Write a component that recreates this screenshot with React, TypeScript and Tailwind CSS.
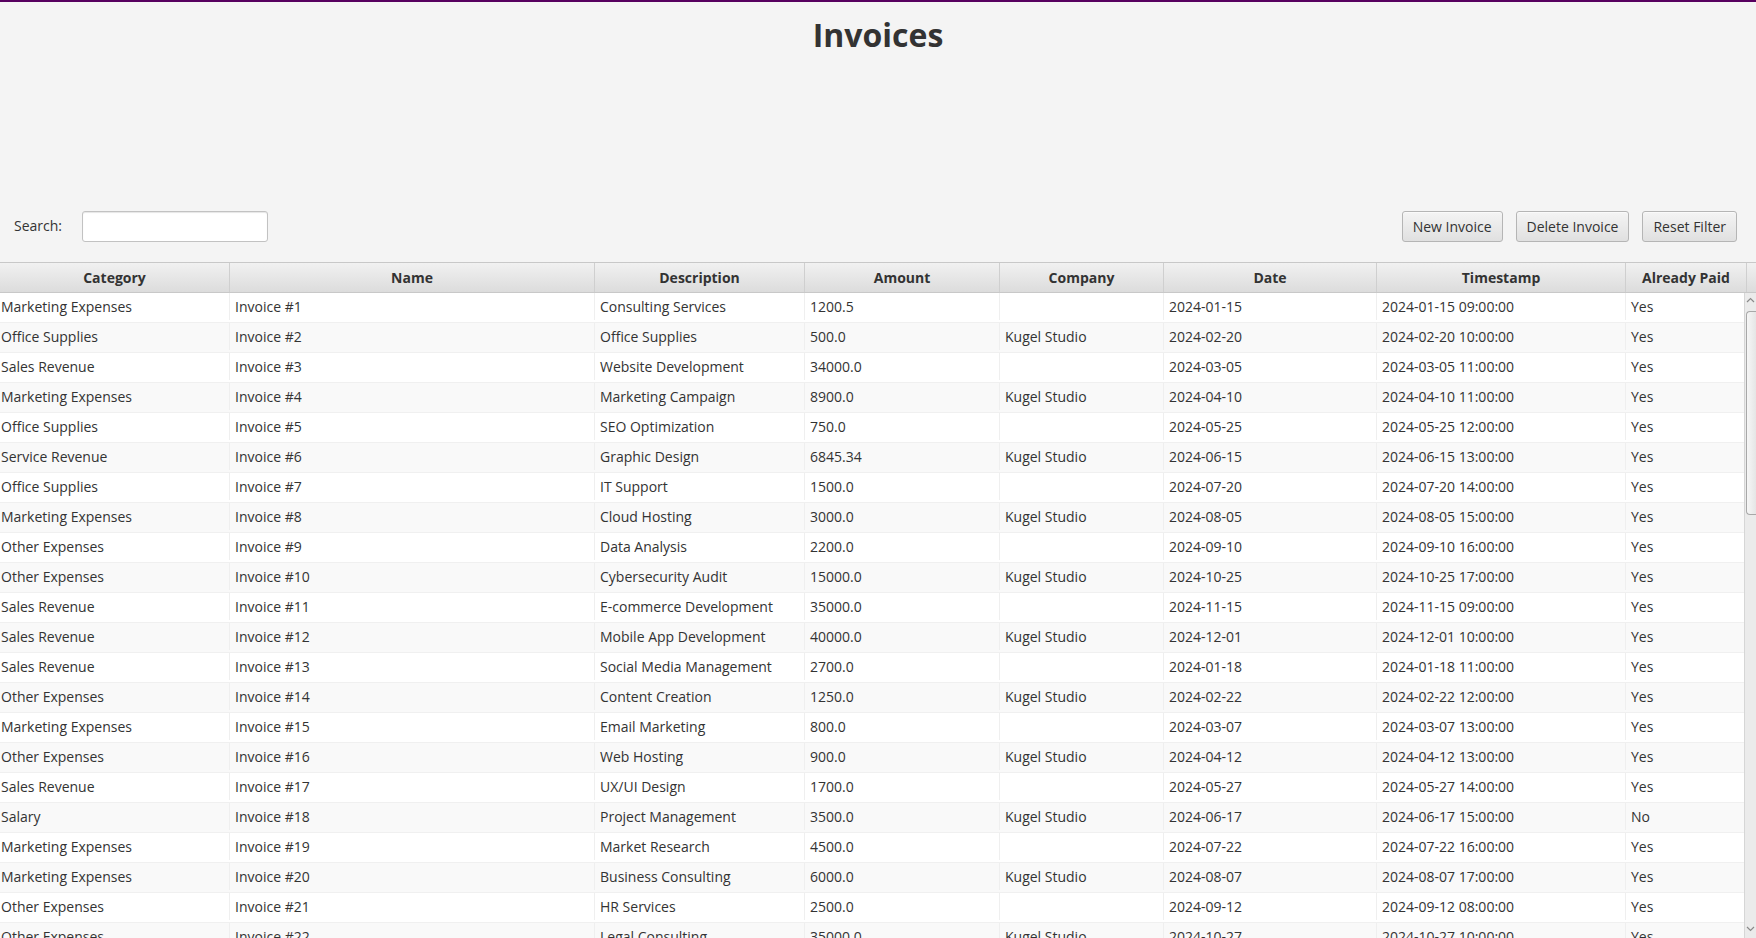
import type { ReactNode } from "react"

type Invoice = {
  category: string
  name: string
  description: string
  amount: string
  company: string
  date: string
  timestamp: string
  paid: string
}

const KS = "Kugel Studio"

const rows: Invoice[] = [
  ["Marketing Expenses", "Consulting Services", "1200.5", "", "2024-01-15", "09:00:00", "Yes"],
  ["Office Supplies", "Office Supplies", "500.0", KS, "2024-02-20", "10:00:00", "Yes"],
  ["Sales Revenue", "Website Development", "34000.0", "", "2024-03-05", "11:00:00", "Yes"],
  ["Marketing Expenses", "Marketing Campaign", "8900.0", KS, "2024-04-10", "11:00:00", "Yes"],
  ["Office Supplies", "SEO Optimization", "750.0", "", "2024-05-25", "12:00:00", "Yes"],
  ["Service Revenue", "Graphic Design", "6845.34", KS, "2024-06-15", "13:00:00", "Yes"],
  ["Office Supplies", "IT Support", "1500.0", "", "2024-07-20", "14:00:00", "Yes"],
  ["Marketing Expenses", "Cloud Hosting", "3000.0", KS, "2024-08-05", "15:00:00", "Yes"],
  ["Other Expenses", "Data Analysis", "2200.0", "", "2024-09-10", "16:00:00", "Yes"],
  ["Other Expenses", "Cybersecurity Audit", "15000.0", KS, "2024-10-25", "17:00:00", "Yes"],
  ["Sales Revenue", "E-commerce Development", "35000.0", "", "2024-11-15", "09:00:00", "Yes"],
  ["Sales Revenue", "Mobile App Development", "40000.0", KS, "2024-12-01", "10:00:00", "Yes"],
  ["Sales Revenue", "Social Media Management", "2700.0", "", "2024-01-18", "11:00:00", "Yes"],
  ["Other Expenses", "Content Creation", "1250.0", KS, "2024-02-22", "12:00:00", "Yes"],
  ["Marketing Expenses", "Email Marketing", "800.0", "", "2024-03-07", "13:00:00", "Yes"],
  ["Other Expenses", "Web Hosting", "900.0", KS, "2024-04-12", "13:00:00", "Yes"],
  ["Sales Revenue", "UX/UI Design", "1700.0", "", "2024-05-27", "14:00:00", "Yes"],
  ["Salary", "Project Management", "3500.0", KS, "2024-06-17", "15:00:00", "No"],
  ["Marketing Expenses", "Market Research", "4500.0", "", "2024-07-22", "16:00:00", "Yes"],
  ["Marketing Expenses", "Business Consulting", "6000.0", KS, "2024-08-07", "17:00:00", "Yes"],
  ["Other Expenses", "HR Services", "2500.0", "", "2024-09-12", "08:00:00", "Yes"],
  ["Other Expenses", "Legal Consulting", "35000.0", KS, "2024-10-27", "10:00:00", "Yes"],
].map(([category, description, amount, company, date, time, paid], i) => ({
  category,
  name: `Invoice #${i + 1}`,
  description,
  amount,
  company,
  date,
  timestamp: `${date} ${time}`,
  paid,
}))

const headers = ["Category", "Name", "Description", "Amount", "Company", "Date", "Timestamp", "Already Paid"]

function ToolButton({ children }: { children: ReactNode }) {
  return (
    <button
      type="button"
      className="h-[31px] rounded-[3px] border border-[#b5b5b5] bg-gradient-to-b from-[#f4f4f4] to-[#e0e0e0] px-[10px] text-[14px] text-[#333] shadow-[inset_0_1px_0_#fafafa]"
    >
      {children}
    </button>
  )
}

function Scrollbar() {
  return (
    <div className="flex w-3 shrink-0 flex-col items-center border-l border-[#d6d6d6] bg-[#ebebeb]">
      <svg className="mt-[4px]" width="9" height="6" viewBox="0 0 9 6">
        <path d="M1 5 L4.5 1.5 L8 5" fill="none" stroke="#8a8a8a" strokeWidth="1.2" />
      </svg>
      <div className="mt-[8px] ml-[3px] h-[204px] w-[12px] rounded-l-[4px] border border-r-0 border-[#a8a8a8] bg-gradient-to-r from-[#f6f6f6] to-[#e2e2e2]" />
      <div className="flex-1" />
      <svg className="mb-[6px]" width="9" height="6" viewBox="0 0 9 6">
        <path d="M1 1 L4.5 4.5 L8 1" fill="none" stroke="#8a8a8a" strokeWidth="1.2" />
      </svg>
    </div>
  )
}

export default function App() {
  return (
    <div
      className="flex h-screen w-full flex-col overflow-hidden border-t-2 border-[#57005f] bg-[#f4f4f4] text-[#333]"
      style={{ fontFamily: '"Open Sans", "Noto Sans", sans-serif' }}
    >
      <div className="h-[209px] shrink-0 pt-[13px]">
        <h1 className="text-center text-[32px] font-bold leading-[40px] text-[#333]">Invoices</h1>
      </div>

      <div className="flex h-[31px] shrink-0 items-center justify-between pl-[14px] pr-[19px]">
        <div className="flex items-center">
          <span className="mb-[3px] w-[68px] text-[14px]">Search:</span>
          <input
            type="text"
            className="h-[31px] w-[186px] rounded-[3px] border border-[#c2c2c2] bg-white px-2 text-[14px] shadow-[inset_0_1px_1px_#e6e6e6] outline-none"
          />
        </div>
        <div className="flex items-center gap-[13px]">
          <ToolButton>New Invoice</ToolButton>
          <ToolButton>Delete Invoice</ToolButton>
          <ToolButton>Reset Filter</ToolButton>
        </div>
      </div>

      <div className="mt-[20px] flex min-h-0 flex-1 flex-col border-t border-[#c8c8c8]">
        <div className="grid h-[30px] shrink-0 grid-cols-[230px_365px_210px_195px_164px_213px_249px_121px_1fr] border-b border-[#c8c8c8] bg-gradient-to-b from-[#f1f1f1] to-[#dcdcdc]">
          {headers.map((h) => (
            <div
              key={h}
              className="flex items-center justify-center border-r border-[#cfcfcf] text-[14px] font-bold text-[#333]"
            >
              {h}
            </div>
          ))}
          <div />
        </div>

        <div className="flex min-h-0 flex-1">
          <div className="min-w-0 flex-1 overflow-hidden">
            {rows.map((r, i) => (
              <div
                key={r.name}
                className={`grid h-[30px] grid-cols-[230px_365px_210px_195px_164px_213px_249px_1fr] border-b border-[#f0f0f0] pb-[2px] text-[14px] text-[#333] ${
                  i % 2 === 0 ? "bg-white" : "bg-[#f9f9f9]"
                }`}
              >
                <div className="flex items-center whitespace-nowrap border-r border-[#efefef] pl-[1px]">{r.category}</div>
                <div className="flex items-center whitespace-nowrap border-r border-[#efefef] pl-[5px]">{r.name}</div>
                <div className="flex items-center whitespace-nowrap border-r border-[#efefef] pl-[5px]">{r.description}</div>
                <div className="flex items-center whitespace-nowrap border-r border-[#efefef] pl-[5px]">{r.amount}</div>
                <div className="flex items-center whitespace-nowrap border-r border-[#efefef] pl-[5px]">{r.company}</div>
                <div className="flex items-center whitespace-nowrap border-r border-[#efefef] pl-[5px]">{r.date}</div>
                <div className="flex items-center whitespace-nowrap border-r border-[#efefef] pl-[5px]">{r.timestamp}</div>
                <div className="flex items-center whitespace-nowrap pl-[5px]">{r.paid}</div>
              </div>
            ))}
          </div>
          <Scrollbar />
        </div>
      </div>
    </div>
  )
}
